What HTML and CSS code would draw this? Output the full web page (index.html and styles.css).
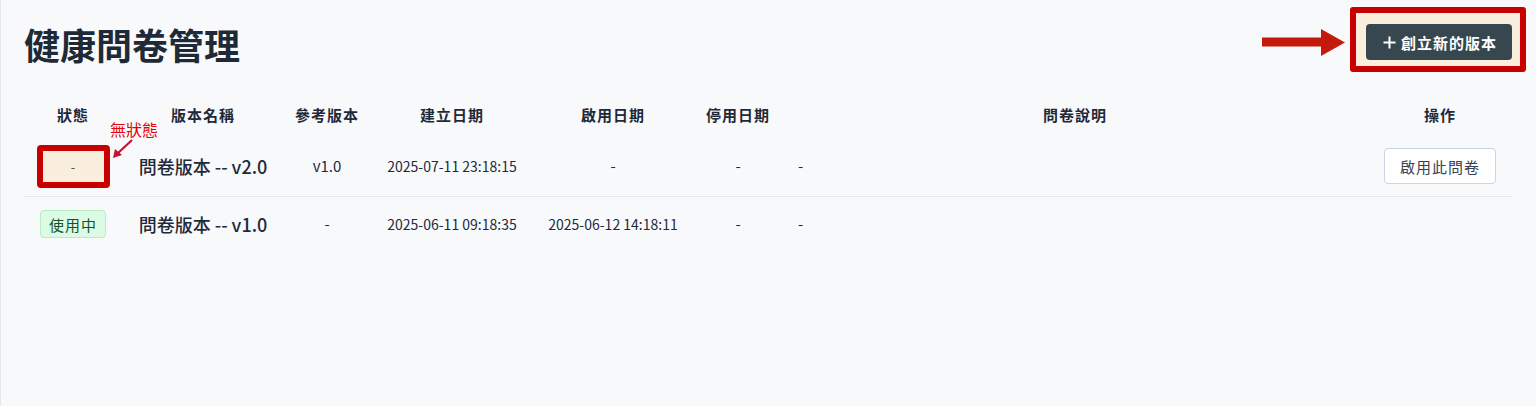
FILE: index.html
```html
<!DOCTYPE html>
<html lang="zh-Hant">
<head>
<meta charset="utf-8">
<title>健康問卷管理</title>
<link rel="stylesheet" href="styles.css">
</head>
<body>
<main class="page">
  <header class="page-head">
    <h1 class="title">健康問卷管理</h1>
    <div class="highlight">
      <svg class="callout-arrow" width="84" height="27" viewBox="0 0 84 27" aria-hidden="true">
        <rect x="0" y="8.5" width="60" height="9" fill="#c41a0c"/>
        <polygon points="59,0 83,13.5 59,27" fill="#c41a0c"/>
      </svg>
      <button class="btn-primary" type="button">
        <svg width="13" height="13" viewBox="0 0 13 13" aria-hidden="true">
          <path d="M6.5 0.5v12M0.5 6.5h12" stroke="#fff" stroke-width="2"/>
        </svg>
        <span>創立新的版本</span>
      </button>
    </div>
  </header>

  <table class="versions">
    <colgroup>
      <col class="c-status"><col class="c-name"><col class="c-ref"><col class="c-created">
      <col class="c-start"><col class="c-stop"><col class="c-desc"><col class="c-op">
    </colgroup>
    <thead>
      <tr>
        <th>狀態</th><th>版本名稱</th><th>參考版本</th><th>建立日期</th>
        <th>啟用日期</th><th>停用日期</th><th>問卷說明</th><th>操作</th>
      </tr>
    </thead>
    <tbody>
      <tr>
        <td class="status-cell">
          <span class="badge badge-none">-</span>
          <span class="note">無狀態</span>
          <svg class="note-arrow" width="24" height="22" viewBox="0 0 24 22" aria-hidden="true">
            <path d="M21 2 L6 16" stroke="#c8102e" stroke-width="2.2"/>
            <polygon points="2,20 4,11 11,17" fill="#c8102e"/>
          </svg>
        </td>
        <td class="name">問卷版本 -- v2.0</td>
        <td>v1.0</td>
        <td class="date">2025-07-11 23:18:15</td>
        <td>-</td>
        <td>-</td>
        <td class="desc">-</td>
        <td><button class="btn-outline" type="button">啟用此問卷</button></td>
      </tr>
      <tr>
        <td class="status-cell"><span class="badge badge-active">使用中</span></td>
        <td class="name">問卷版本 -- v1.0</td>
        <td>-</td>
        <td class="date">2025-06-11 09:18:35</td>
        <td class="date">2025-06-12 14:18:11</td>
        <td>-</td>
        <td class="desc">-</td>
        <td></td>
      </tr>
    </tbody>
  </table>
</main>
</body>
</html>
```

FILE: styles.css
```css
* { box-sizing: border-box; }

html, body {
  margin: 0;
  height: 100%;
  background: #f8f9fb;
}

body {
  font-family: "Noto Sans CJK TC", "Noto Sans", sans-serif;
  color: #1e293b;
}

.page {
  min-height: 100%;
  border-left: 1px solid #e4e7eb;
  padding: 24px 24px 0 23px;
}

.page-head {
  display: flex;
  justify-content: space-between;
  align-items: center;
  height: 36px;
  margin-bottom: 32px;
}

.title {
  margin: 4px 0 0;
  font-size: 36px;
  font-weight: 700;
  line-height: 1;
  color: #1f2a37;
}

.highlight {
  position: relative;
  isolation: isolate;
}

.highlight::before {
  content: "";
  position: absolute;
  top: -17px;
  left: -16px;
  right: -14px;
  bottom: -12px;
  border: 6px solid #c80000;
  border-radius: 3px;
  background: #f9efdc;
  z-index: -1;
}

.callout-arrow {
  position: absolute;
  left: -104px;
  top: 5px;
}

.btn-primary {
  display: flex;
  align-items: center;
  gap: 5px;
  height: 36px;
  padding: 0 15px 0 17px;
  border: 0;
  border-radius: 4px;
  background: #37474f;
  color: #fff;
  font-family: inherit;
  font-size: 15px;
  font-weight: 700;
  letter-spacing: 1px;
}

.versions {
  width: 1488px;
  border-collapse: collapse;
  table-layout: fixed;
}

.c-status { width: 98px; }
.c-name { width: 162px; }
.c-ref { width: 86px; }
.c-created { width: 164px; }
.c-start { width: 158px; }
.c-stop { width: 92px; }
.c-desc { width: 582px; }
.c-op { width: 146px; }

.versions th {
  height: 44px;
  font-size: 15px;
  font-weight: 700;
  letter-spacing: 1px;
  color: #1f2937;
  text-align: center;
  padding: 0;
}

.versions th:last-child {
  padding-left: 2px;
}

.versions td {
  text-align: center;
  font-size: 15px;
  padding: 0;
  color: #1e293b;
}

.versions tbody tr:first-child td {
  height: 60px;
  border-bottom: 1px solid #e3e6ea;
}

.versions tbody tr:nth-child(2) td {
  height: 55px;
}

.versions td.name {
  font-size: 18px;
  font-weight: 500;
  color: #1e2b3c;
}

.versions td.date {
  font-size: 14px;
}

.versions td.desc {
  text-align: left;
  padding-left: 14px;
}

.status-cell {
  position: relative;
}

.badge {
  display: inline-flex;
  align-items: center;
  justify-content: center;
  border-radius: 4px;
  font-size: 15px;
  line-height: 1;
}

.badge-none {
  width: 73px;
  height: 43px;
  border: 6px solid #c80000;
  background: #f9efdc;
  color: #555;
  font-size: 13px;
  margin-top: 2px;
}

.badge-active {
  width: 66px;
  height: 28px;
  border: 1px solid #b9ecc6;
  background: #dcfbe4;
  color: #14532d;
  letter-spacing: 1px;
  margin-top: 1px;
}

.note {
  position: absolute;
  left: 86px;
  top: -19px;
  color: #e8000b;
  font-size: 16px;
  white-space: nowrap;
}

.note-arrow {
  position: absolute;
  left: 87px;
  top: 2px;
}

.btn-outline {
  width: 112px;
  height: 36px;
  border: 1px solid #cdd5e0;
  border-radius: 4px;
  background: #fff;
  color: #374151;
  font-family: inherit;
  font-size: 15px;
  letter-spacing: 1px;
  margin: 1px 0 0 2px;
}
```
